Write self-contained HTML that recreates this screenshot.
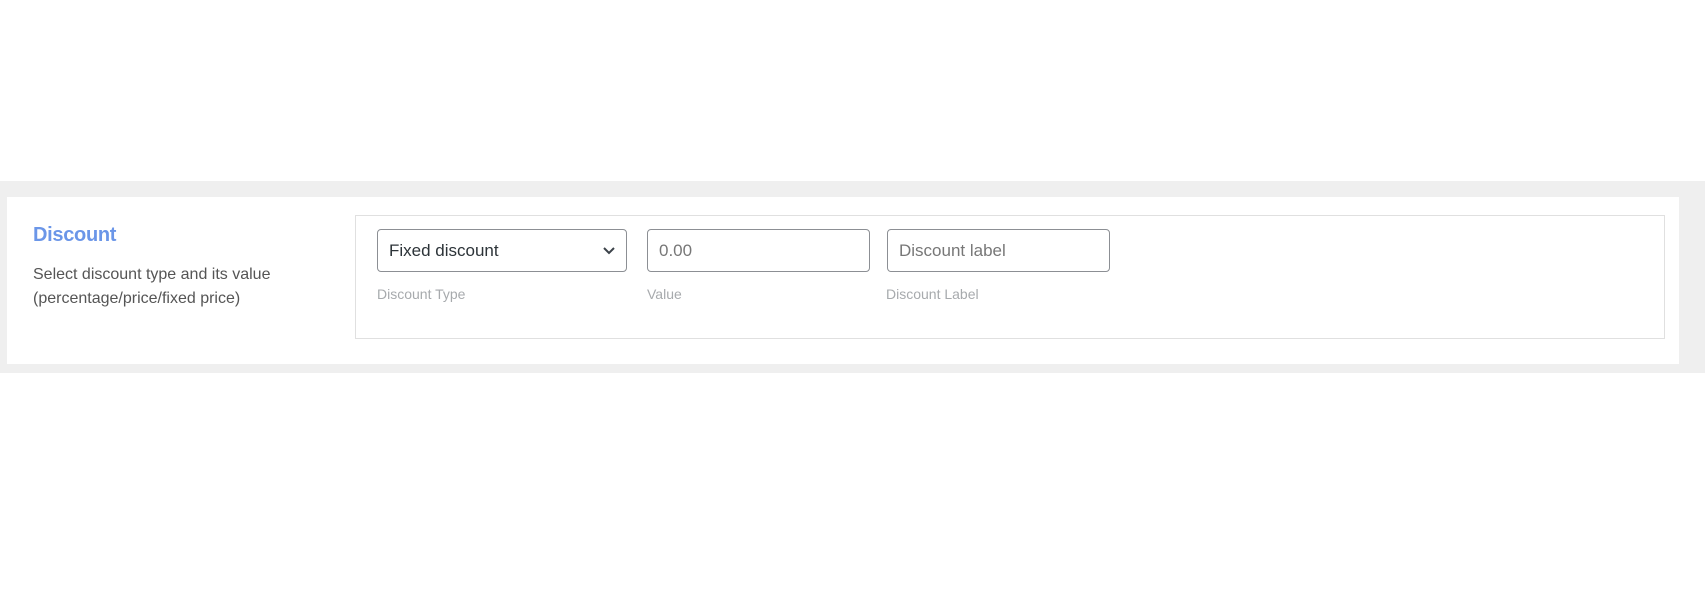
<!DOCTYPE html>
<html><head><style>
body{margin:0;width:1705px;height:599px;background:#fff;position:relative;font-family:"Liberation Sans",sans-serif;overflow:hidden}
.gray{position:absolute;left:0;top:181px;width:1705px;height:192px;background:#efefef}
.white{position:absolute;left:7px;top:197px;width:1672px;height:167px;background:#fff}
.box{position:absolute;left:355px;top:215px;width:1310px;height:124px;border:1px solid #e0e0e0;box-sizing:border-box}
.title{position:absolute;left:33px;top:224px;font-size:20px;color:#6b96e8;font-weight:bold;letter-spacing:-0.3px}
.desc{position:absolute;left:33px;top:263px;font-size:16px;line-height:24px;color:#555}
.inp{position:absolute;top:229px;height:43px;border:1px solid #8c8f94;border-radius:4px;box-sizing:border-box;font-size:17px;padding-left:11px;line-height:41px}
.lbl{position:absolute;top:286px;font-size:14px;color:#a7aaad}
</style></head><body>
<div class="gray"></div><div class="white"></div><div class="box"></div>
<div class="title">Discount</div>
<div class="desc">Select discount type and its value<br>(percentage/price/fixed price)</div>
<div class="inp" style="left:377px;width:250px;color:#2c3338">Fixed discount
<svg style="position:absolute;right:10px;top:16px" width="14" height="10" viewBox="0 0 14 10"><path d="M2 2l5 5 5-5" fill="none" stroke="#3c434a" stroke-width="2"/></svg></div>
<div class="inp" style="left:647px;width:223px;color:#777">0.00</div>
<div class="inp" style="left:887px;width:223px;color:#777">Discount label</div>
<div class="lbl" style="left:377px">Discount Type</div>
<div class="lbl" style="left:647px">Value</div>
<div class="lbl" style="left:886px">Discount Label</div>
</body></html>
